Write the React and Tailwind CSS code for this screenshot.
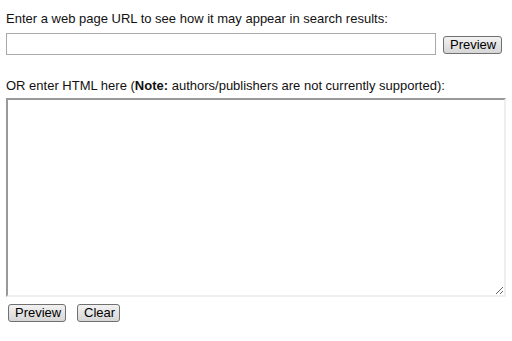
import React from 'react'

function Btn({ children, className = '' }) {
  return (
    <button
      className={`h-[18px] px-[6px] rounded-[3px] border border-[#707070] bg-gradient-to-b from-[#f2f2f2] to-[#d6d6d6] text-[13px] leading-[14px] text-black ${className}`}
    >
      {children}
    </button>
  )
}

export default function App() {
  return (
    <div className="w-[512px] h-[341px] bg-white pl-[6px] pt-[11px] text-[13px] leading-[15px] text-[#111] font-['Liberation_Sans',Arial,sans-serif]">
      <div>Enter a web page URL to see how it may appear in search results:</div>
      <div className="mt-[7px] flex items-center gap-[7px]">
        <input type="text" className="w-[430px] h-[22px] border border-[#a9a9a9] outline-none px-1" />
        <Btn className="w-[59px] mt-[1px]">Preview</Btn>
      </div>
      <div className="mt-[23px]">
        OR enter HTML here (<b>Note:</b> authors/publishers are not currently supported):
      </div>
      <textarea className="block mt-[5px] w-[500px] h-[199px] border-2 border-t-[#999] border-l-[#999] border-r-[#eee] border-b-[#eee] outline-none" />
      <div className="mt-[7px] ml-[2px] flex gap-[11px]">
        <Btn className="w-[58px]">Preview</Btn>
        <Btn className="w-[43px]">Clear</Btn>
      </div>
    </div>
  )
}
